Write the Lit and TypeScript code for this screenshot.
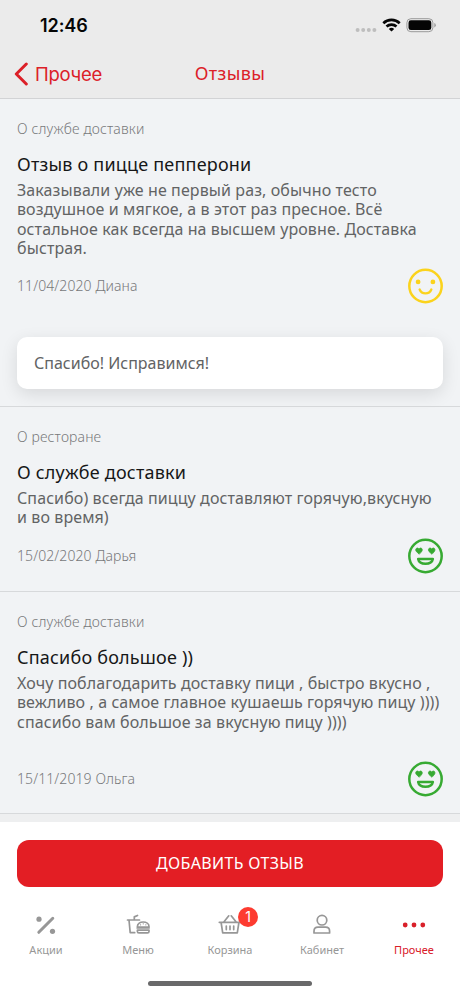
import { LitElement, html, css, svg, nothing } from "lit";
import { customElement, property } from "lit/decorators.js";

interface Review {
  topic: string;
  title: string;
  lines: string[];
  meta: string;
  mood: "smile" | "love";
  reply?: string;
}

const REVIEWS: Review[] = [
  {
    topic: "О службе доставки",
    title: "Отзыв о пицце пепперони",
    lines: [
      "Заказывали уже не первый раз, обычно тесто",
      "воздушное и мягкое, а в этот раз пресное. Всё",
      "остальное как всегда на высшем уровне. Доставка",
      "быстрая.",
    ],
    meta: "11/04/2020 Диана",
    mood: "smile",
    reply: "Спасибо! Исправимся!",
  },
  {
    topic: "О ресторане",
    title: "О службе доставки",
    lines: ["Спасибо) всегда пиццу доставляют горячую,вкусную", "и во время)"],
    meta: "15/02/2020 Дарья",
    mood: "love",
  },
  {
    topic: "О службе доставки",
    title: "Спасибо большое ))",
    lines: [
      "Хочу поблагодарить доставку пици , быстро вкусно ,",
      "вежливо , а самое главное кушаешь горячую пицу ))))",
      "спасибо вам большое за вкусную пицу ))))",
    ],
    meta: "15/11/2019 Ольга",
    mood: "love",
  },
];

const heart = (x: number) =>
  svg`<path fill="currentColor" stroke="currentColor" stroke-width="0.8" transform="translate(${x} 9.8)"
    d="M3.5 6.2 .8 3.700C-.3 2.300.2.300 1.800.200c.8 0 1.400.5 1.700 1C3.800.700 4.400.200 5.200.200c1.600.1 2.100 2.100 1 3.500Z"/>`;

@customElement("mood-face")
class MoodFace extends LitElement {
  @property() mood = "smile";
  static styles = css`
    :host { display: block; width: 36px; height: 36px; flex: none; }
    svg { display: block; }
    .smile { color: #fbd31c; }
    .love { color: #37aa32; }
  `;
  render() {
    return html`<svg class=${this.mood} width="36" height="36" viewBox="0 0 36 36" fill="none" stroke="currentColor" stroke-linecap="round" stroke-linejoin="round">
      <circle cx="18.5" cy="18" r="16.2" stroke-width="2.5" />
      ${this.mood === "smile"
        ? svg`<circle cx="11.1" cy="13.9" r="2.4" fill="currentColor" stroke="none"/>
            <circle cx="25.9" cy="13.9" r="2.4" fill="currentColor" stroke="none"/>
            <path d="M12.7 21.6c2 5 9.600 5 11.600 0" stroke-width="2.4"/>`
        : svg`${heart(8.5)}${heart(21.2)}
            <path d="M11.100 21h14.800c-1.200 6.400-13.600 6.400-14.800 0Z" stroke-width="2.4"/>`}
    </svg>`;
  }
}

@customElement("review-item")
class ReviewItem extends LitElement {
  @property({ attribute: false }) review!: Review;
  static styles = css`
    :host { display: flex; flex-direction: column; padding: 20px 17px 17px; border-bottom: 1px solid #d7d9db; white-space: nowrap; box-sizing: border-box; }
    .topic { height: 20px; line-height: 20px; font-size: 14px; color: #77787a; font-weight: 300; letter-spacing: 0.15px; }
    .title { margin-top: 13px; height: 24px; line-height: 24px; font-size: 18px; color: #161718; letter-spacing: 0.2px; }
    .body { margin-top: 5px; font-size: 16px; line-height: 19.3px; color: #626364; letter-spacing: 0.1px; }
    .foot { display: flex; justify-content: space-between; align-items: center; margin-top: auto; }
    .meta { font-size: 14px; line-height: 20px; color: #77787a; font-weight: 300; letter-spacing: 0.1px; }
    .reply { margin-top: 33px; height: 52px; line-height: 53px; padding: 0 17px; border-radius: 10px; background: #fff; font-size: 16px; color: #626364; box-shadow: 0 5px 17px rgba(0, 0, 0, 0.11); }
  `;
  render() {
    const r = this.review;
    return html`<div class="topic">${r.topic}</div>
      <div class="title">${r.title}</div>
      <div class="body">${r.lines.map((l) => html`<div>${l}</div>`)}</div>
      <div class="foot"><div class="meta">${r.meta}</div><mood-face .mood=${r.mood}></mood-face></div>
      ${r.reply ? html`<div class="reply">${r.reply}</div>` : nothing}`;
  }
}

const ICONS = {
  promo: svg`<path d="M4.8 19.300 18.800 5.300" stroke-width="3"/><circle cx="5" cy="6.200" r="2.600" fill="currentColor" stroke="none"/><circle cx="18.500" cy="18.300" r="2.600" fill="currentColor" stroke="none"/>`,
  menu: svg`<path d="M1.500 7h12M3 7l1.200 12.700h4.500M8.300 6.800V3.900L11.500 2.500M23 14v-.5c0-6-11.600-6-11.600 0v.5ZM11.400 17.200H23v1.200q0 1.500-1.500 1.500h-8.600q-1.500 0-1.500-1.500ZM11.200 15h12"/><path d="M14.500 11.800h.1M17.200 10.800h.1M19.800 11.800h.1" stroke-width="1.200"/>`,
  cart: svg`<path d="M1.300 9.300h21.400M3.100 9.500l1.600 10.300h14.600l1.600-10.300M5.800 9l5-6.200M18.200 9l-5-6.200M8.300 13v3.600M12 13v3.600M15.700 13v3.600"/>`,
  user: svg`<circle cx="12" cy="7.200" r="4.800"/><path d="M4 20v-1.800q0-4 4-4h7.600q4 0 4 4V20Z"/>`,
  more: svg`<g fill="currentColor" stroke="none"><circle cx="3.200" cy="12" r="2.400"/><circle cx="12" cy="12" r="2.400"/><circle cx="20.800" cy="12" r="2.400"/></g>`,
};

const TABS = [
  { label: "Акции", icon: ICONS.promo },
  { label: "Меню", icon: ICONS.menu },
  { label: "Корзина", icon: ICONS.cart, badge: "1" },
  { label: "Кабинет", icon: ICONS.user },
  { label: "Прочее", icon: ICONS.more, active: true },
];

@customElement("app-root")
class AppRoot extends LitElement {
  static styles = css`
    :host { display: flex; flex-direction: column; height: 996px; width: 460px; overflow: hidden; background: #f1f3f5; font-family: "Noto Sans", "Open Sans", sans-serif; }
    * { box-sizing: border-box; }
    svg { display: block; }
    header { height: 99px; flex: none; background: #ebebeb; border-bottom: 1px solid #d2d3d5; }
    .status { height: 50px; padding: 0 23px 0 40px; display: flex; align-items: center; justify-content: space-between; }
    .time { font: 600 18px/50px Inter, sans-serif; letter-spacing: -0.1px; color: #050505; padding-top: 1px; }
    .nav { display: grid; grid-template-columns: 1fr auto 1fr; align-items: center; height: 48px; padding: 0 14px; color: #dc2028; }
    .back { display: flex; align-items: center; gap: 7px; font: 18.5px/48px Inter, sans-serif; letter-spacing: -0.25px; }
    .heading { font-size: 18px; letter-spacing: 0.4px; line-height: 46px; margin-bottom: 2px; }
    main { flex: none; height: 723px; background: #f1f3f5; overflow: hidden; }
    .r0 { height: 308px; }
    .r1 { height: 185px; }
    .r2 { height: 222px; padding-bottom: 16px; }
    .rest { height: 8px; background: #eeeff0; }
    footer { flex: 1; background: #fff; padding: 18px 0 0; display: flex; flex-direction: column; }
    .add { margin: 0 17px; height: 47px; flex: none; border: 0; border-radius: 12px; background: #e31e24; color: #fff; font: 16px/47px "Noto Sans", sans-serif; letter-spacing: 0.35px; padding: 0; }
    .tabs { display: grid; grid-template-columns: repeat(5, 1fr); margin-top: 26px; height: 48px; }
    .tab { display: flex; flex-direction: column; align-items: center; color: #979797; font-size: 11px; line-height: 16px; gap: 5px; }
    .active { color: #d9202a; }
    .icon { position: relative; }
    .badge { position: absolute; left: 20px; top: -6px; width: 20px; height: 20px; border-radius: 50%; background: #fd3b30; color: #fff; font: 14px/20px Inter, sans-serif; text-align: center; }
    .home { width: 164px; height: 5px; border-radius: 3px; background: #69696a; margin: 20px auto 0; }
  `;
  render() {
    return html`
      <header>
        <div class="status">
          <div class="time">12:46</div>
          <svg width="82" height="18" viewBox="0 0 82 18">
            <g fill="#bebebe"><circle cx="2.600" cy="14" r="2"/><circle cx="8.200" cy="14" r="2"/><circle cx="13.800" cy="14" r="2"/><circle cx="19.400" cy="14" r="2"/></g>
            <g fill="none" stroke="#050505" stroke-width="2.700"><path d="M28.300 7.200a12 12 0 0 1 16.400 0M31.500 10.600a7.300 7.300 0 0 1 10 0"/></g>
            <path d="M36.500 15.600l-2.700-2.700a4 4 0 0 1 5.400 0Z" fill="#050505"/>
            <rect x="51.900" y="2.700" width="26" height="13" rx="4" fill="none" stroke="#9b9b9b"/>
            <rect x="53.500" y="4.300" width="22.800" height="9.800" rx="2.400" fill="#050505"/>
            <path d="M79.300 7v4.400q1.500-.6 1.500-2.200T79.300 7Z" fill="#9b9b9b"/>
          </svg>
        </div>
        <div class="nav">
          <div class="back">
            <svg width="14" height="24" viewBox="0 0 14 24" fill="none" stroke="currentColor" stroke-width="3" stroke-linecap="round" stroke-linejoin="round"><path d="M12.300 2 2.300 12l10 10"/></svg>
            <span>Прочее</span>
          </div>
          <div class="heading">Отзывы</div>
        </div>
      </header>
      <main>
        ${REVIEWS.map((r, i) => html`<review-item class="r${i}" .review=${r}></review-item>`)}
        <div class="rest"></div>
      </main>
      <footer>
        <button class="add">ДОБАВИТЬ ОТЗЫВ</button>
        <div class="tabs">
          ${TABS.map(
            (t) => html`<div class="tab ${t.active ? "active" : ""}">
              <div class="icon">
                <svg width="24" height="24" viewBox="0 0 24 24" fill="none" stroke="currentColor" stroke-width="1.700" stroke-linecap="round" stroke-linejoin="round">${t.icon}</svg>
                ${t.badge ? html`<span class="badge">${t.badge}</span>` : nothing}
              </div>
              <span>${t.label}</span>
            </div>`
          )}
        </div>
        <div class="home"></div>
      </footer>
    `;
  }
}
